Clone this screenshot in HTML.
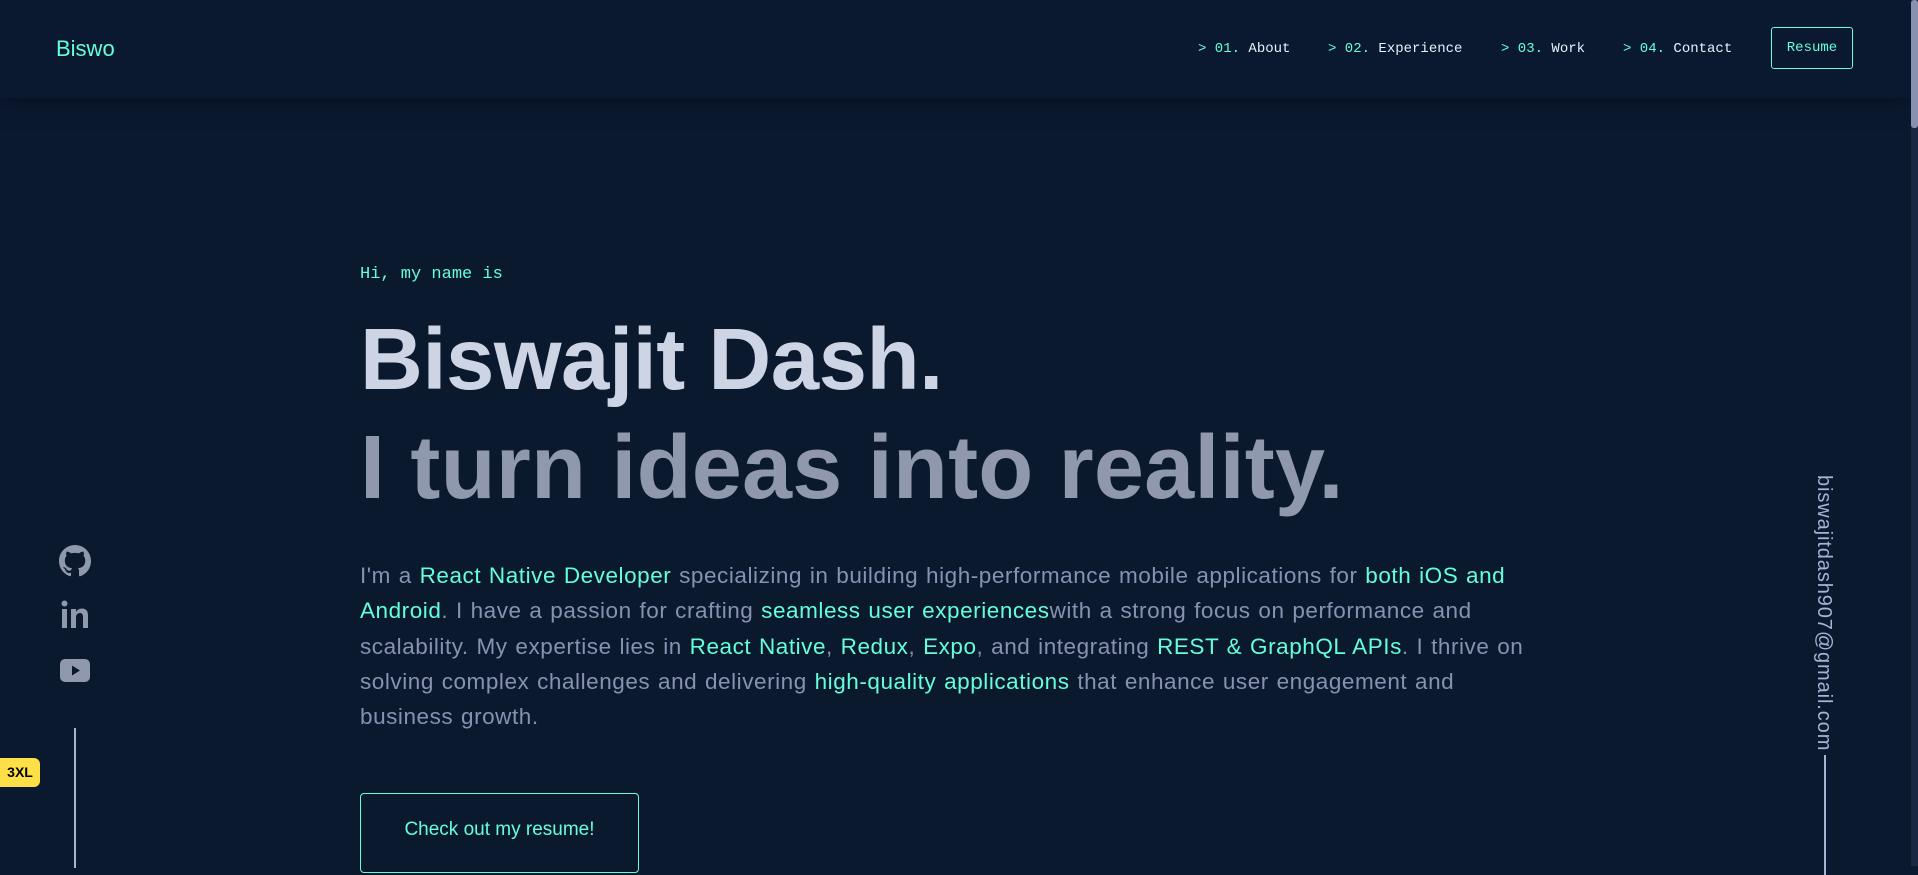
<!DOCTYPE html>
<html><head><meta charset="utf-8"><style>
*{margin:0;padding:0;box-sizing:border-box}
html,body{width:1918px;height:866px;overflow:hidden;background:#0b192f;font-family:"Liberation Sans",sans-serif}
.hdr{position:absolute;left:0;top:0;width:1911px;height:98px;background:#0a192f;box-shadow:0 6px 18px rgba(2,12,27,.5)}
.logo{position:absolute;left:56px;top:36px;font-size:22px;color:#64ffda}
.nav{position:absolute;top:41px;font-family:"Liberation Mono",monospace;font-size:14px;color:#e6f1ff}
.nav span{color:#64ffda}
.res{position:absolute;left:1771px;top:27px;width:82px;height:42px;border:1px solid #64ffda;border-radius:3px;color:#64ffda;font-family:"Liberation Mono",monospace;font-size:14px;text-align:center;line-height:40px}
.sb{position:absolute;left:1911px;top:0;width:7px;height:866px;background:#1a2740}
.sb div{width:7px;height:128px;background:#8892b0;border-radius:3px}
.hi{position:absolute;left:360px;top:265px;font-family:"Liberation Mono",monospace;font-size:17px;color:#64ffda}
.h1{position:absolute;left:360px;font-weight:bold;letter-spacing:-0.5px;white-space:nowrap}
.p{position:absolute;left:360px;top:558px;width:1175px;font-size:22.5px;line-height:35.3px;color:#8892b0;letter-spacing:0.55px;word-spacing:1px}
.p b{font-weight:normal;color:#64ffda}
.btn{position:absolute;left:360px;top:793px;width:279px;height:80px;border:1px solid #64ffda;border-radius:4px;color:#64ffda;font-size:19px;text-align:center;padding-top:25px}
.vl{position:absolute;width:2px;background:#a8b2d1}
.badge{position:absolute;left:0;top:758px;width:40px;height:29px;background:#fde047;border-radius:0 6px 6px 0;font-weight:bold;font-size:14px;color:#000;text-align:center;line-height:29px}
.mail{position:absolute;left:1812px;top:475px;writing-mode:vertical-rl;font-size:20px;color:#a8b2d1;letter-spacing:0.9px}
</style></head><body>
<div class="hdr">
<div class="logo">Biswo</div>
<div class="nav" style="left:1198px"><span>&gt; 01.</span> About</div>
<div class="nav" style="left:1328px"><span>&gt; 02.</span> Experience</div>
<div class="nav" style="left:1501px"><span>&gt; 03.</span> Work</div>
<div class="nav" style="left:1623px"><span>&gt; 04.</span> Contact</div>
<div class="res">Resume</div>
</div>
<div class="sb"><div></div></div>
<div class="hi">Hi, my name is</div>
<div class="h1" style="top:310px;font-size:87px;color:#cdd4e4">Biswajit Dash.</div>
<div class="h1" style="top:417px;font-size:90px;letter-spacing:0.2px;color:#8f98ad">I turn ideas into reality.</div>
<div class="p">I'm a <b>React Native Developer</b> specializing in building high-performance mobile applications for <b>both iOS and Android</b>. I have a passion for crafting <b>seamless user experiences</b>with a strong focus on performance and scalability. My expertise lies in <b>React Native</b>, <b>Redux</b>, <b>Expo</b>, and integrating <b>REST &amp; GraphQL APIs</b>. I thrive on solving complex challenges and delivering <b>high-quality applications</b> that enhance user engagement and business growth.</div>
<div class="btn">Check out my resume!</div>
<svg style="position:absolute;left:59px;top:545px" width="32" height="32" viewBox="0 0 16 16" fill="#8f98ad"><path d="M8 0C3.58 0 0 3.58 0 8c0 3.54 2.29 6.53 5.47 7.59.4.07.55-.17.55-.38v-1.33c-2.23.48-2.7-1.07-2.7-1.07-.36-.92-.89-1.17-.89-1.17-.73-.5.06-.49.06-.49.8.06 1.23.83 1.23.83.72 1.23 1.88.87 2.33.67.07-.52.28-.87.51-1.07-1.78-.2-3.64-.89-3.64-3.95 0-.87.31-1.590.82-2.15-.08-.2-.36-1.02.08-2.12 0 0 .67-.21 2.2.82a7.6 7.6 0 0 1 4 0c1.53-1.04 2.2-.82 2.2-.82.44 1.1.16 1.92.08 2.12.51.56.82 1.27.82 2.15 0 3.07-1.87 3.75-3.65 3.95.29.25.54.73.54 1.48v2.2c0 .21.15.46.55.38A8.01 8.01 0 0 0 16 8c0-4.42-3.58-8-8-8z"/></svg>
<svg style="position:absolute;left:61px;top:600px" width="28" height="30" viewBox="0 0 28 30" fill="#8f98ad"><circle cx="3.5" cy="3.5" r="3"/><rect x="1" y="9" width="5" height="19"/><path d="M10 9h5v3c1.2-2 3-3.5 6-3.5 4 0 6 2.5 6 7V28h-5V17c0-2.5-1-4-3-4s-4 1.5-4 4v11h-5z"/></svg>
<svg style="position:absolute;left:59px;top:658px" width="32" height="26" viewBox="0 0 32 26"><rect x="1" y="1" width="30" height="23" rx="5" fill="#8f98ad"/><path d="M13 7.5v10l8-5z" fill="#0b192f"/></svg>
<div class="vl" style="left:74px;top:728px;height:140px"></div>
<div class="badge">3XL</div>
<div class="mail">biswajitdash907@gmail.com</div>
<div class="vl" style="left:1824px;top:755px;height:120px"></div>
</body></html>
